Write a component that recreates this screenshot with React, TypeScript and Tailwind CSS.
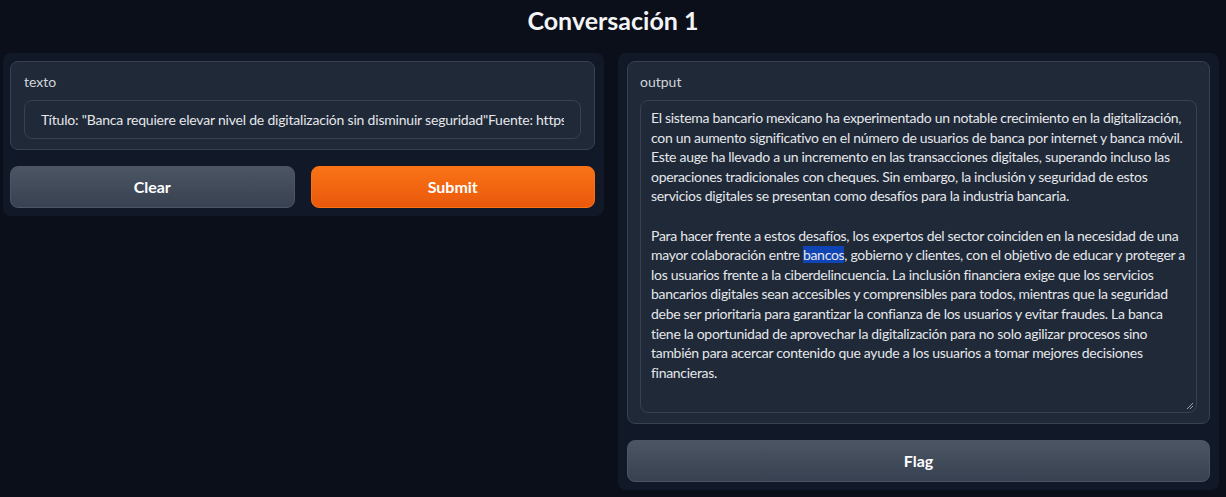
import React from 'react';

const font = { fontFamily: 'Lato, "Noto Sans", sans-serif' };

const para1 = [
  'El sistema bancario mexicano ha experimentado un notable crecimiento en la digitalización,',
  'con un aumento significativo en el número de usuarios de banca por internet y banca móvil.',
  'Este auge ha llevado a un incremento en las transacciones digitales, superando incluso las',
  'operaciones tradicionales con cheques. Sin embargo, la inclusión y seguridad de estos',
  'servicios digitales se presentan como desafíos para la industria bancaria.',
];

const para2Rest = [
  'los usuarios frente a la ciberdelincuencia. La inclusión financiera exige que los servicios',
  'bancarios digitales sean accesibles y comprensibles para todos, mientras que la seguridad',
  'debe ser prioritaria para garantizar la confianza de los usuarios y evitar fraudes. La banca',
  'tiene la oportunidad de aprovechar la digitalización para no solo agilizar procesos sino',
  'también para acercar contenido que ayude a los usuarios a tomar mejores decisiones',
  'financieras.',
];

export default function App() {
  return (
    <div className="min-h-screen bg-[#0b0f19] text-[#e5e7eb]" style={font}>
      <h1 className="h-[45px] pt-[4px] text-center text-[25px] font-bold leading-[32px] text-[#f3f4f6]">
        Conversación 1
      </h1>

      <div className="grid grid-cols-[minmax(0,1fr)_minmax(0,1fr)] items-start gap-[14px] pl-[3px] pr-[7px] pt-[8px]">
        {/* left column */}
        <div className="overflow-hidden rounded-lg bg-[#111827] pl-[7px] pr-[9px] pt-[8px] pb-[8px]">
          <div className="rounded-lg border border-[#374151] bg-[#1f2937] px-[13px] pt-[10px] pb-[10px]">
            <p className="mb-[8px] text-[14px] leading-[20px] text-[#d1d5db]">texto</p>
            <div className="flex h-[39px] items-center overflow-hidden whitespace-nowrap rounded-lg border border-[#374151] bg-[#1f2937] px-[16px] text-[14px] tracking-[-0.2px] text-[#e5e7eb]">
              <span className="block overflow-hidden">
                Título: "Banca requiere elevar nivel de digitalización sin disminuir seguridad"Fuente: https://www.eleconomista.com.mx
              </span>
            </div>
          </div>
          <div className="mt-[16px] grid grid-cols-2 gap-[16px]">
            <button className="h-[42px] rounded-lg border border-[#4b5563] bg-gradient-to-b from-[#4b5563] to-[#374151] text-[16px] font-bold text-white">
              Clear
            </button>
            <button className="h-[42px] rounded-lg border border-[#f97316] bg-gradient-to-b from-[#f97316] to-[#ea580c] text-[16px] font-bold text-white">
              Submit
            </button>
          </div>
        </div>

        {/* right column */}
        <div className="overflow-hidden rounded-lg bg-[#111827] px-[9px] pt-[8px] pb-[8px]">
          <div className="rounded-lg border border-[#374151] bg-[#1f2937] px-[12px] pt-[10px] pb-[10px]">
            <p className="mb-[8px] text-[14px] leading-[20px] text-[#d1d5db]">output</p>
            <div className="relative h-[313px] overflow-hidden rounded-lg border border-[#374151] bg-[#1f2937] px-[10px] pt-[7px] text-[14px] leading-[19.6px] tracking-[-0.3px] text-[#e5e7eb]">
              {para1.map((l) => (
                <div key={l} className="whitespace-nowrap">{l}</div>
              ))}
              <div className="h-[19.6px]" />
              <div className="whitespace-nowrap">
                Para hacer frente a estos desafíos, los expertos del sector coinciden en la necesidad de una
              </div>
              <div className="whitespace-nowrap">
                mayor colaboración entre <span className="bg-[#0e44b3]">bancos</span>, gobierno y clientes, con el objetivo de educar y proteger a
              </div>
              {para2Rest.map((l) => (
                <div key={l} className="whitespace-nowrap">{l}</div>
              ))}
              <svg className="absolute bottom-[2px] right-[2px]" width="8" height="8" viewBox="0 0 8 8">
                <path d="M7 1 L1 7 M7 4 L4 7" stroke="#9ca3af" strokeWidth="1" />
              </svg>
            </div>
          </div>
          <button className="mt-[16px] h-[42px] w-full rounded-lg border border-[#4b5563] bg-gradient-to-b from-[#4b5563] to-[#374151] text-[16px] font-bold text-white">
            Flag
          </button>
        </div>
      </div>
    </div>
  );
}
